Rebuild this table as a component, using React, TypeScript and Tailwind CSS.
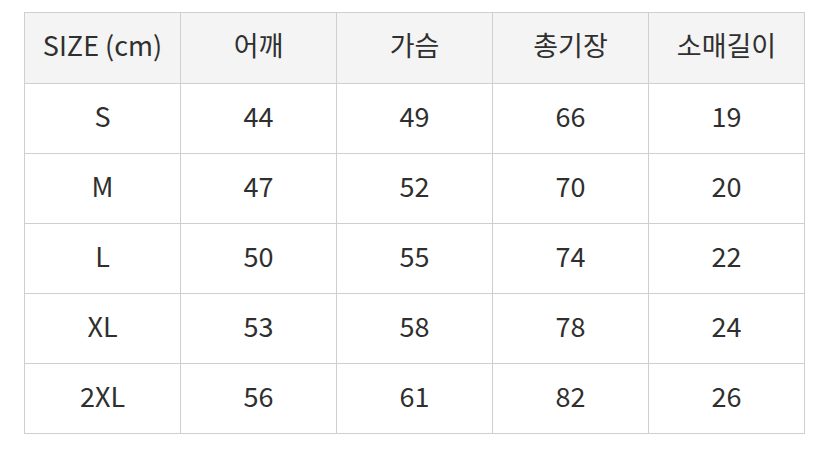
export default function App() {
  const headers = ["SIZE (cm)", "어깨", "가슴", "총기장", "소매길이"];
  const rows = [
    ["S", "44", "49", "66", "19"],
    ["M", "47", "52", "70", "20"],
    ["L", "50", "55", "74", "22"],
    ["XL", "53", "58", "78", "24"],
    ["2XL", "56", "61", "82", "26"],
  ];

  return (
    <div
      className="w-[828px] h-[458px] bg-white pt-[12px] pl-[24px]"
      style={{ fontFamily: '"Noto Sans CJK KR", "Noto Sans", sans-serif' }}
    >
      <table className="w-[781px] table-fixed border-collapse text-[27px] text-[#2f2f2f]">
        <thead>
          <tr className="bg-[#f4f4f4]">
            {headers.map((h) => (
              <th
                key={h}
                className="h-[71px] pb-[5px] border border-[#cfcfcf] text-center font-normal"
              >
                {h}
              </th>
            ))}
          </tr>
        </thead>
        <tbody>
          {rows.map((row) => (
            <tr key={row[0]}>
              {row.map((cell, i) => (
                <td
                  key={i}
                  className="h-[70px] pb-[5px] border border-[#cfcfcf] text-center"
                >
                  {cell}
                </td>
              ))}
            </tr>
          ))}
        </tbody>
      </table>
    </div>
  );
}
